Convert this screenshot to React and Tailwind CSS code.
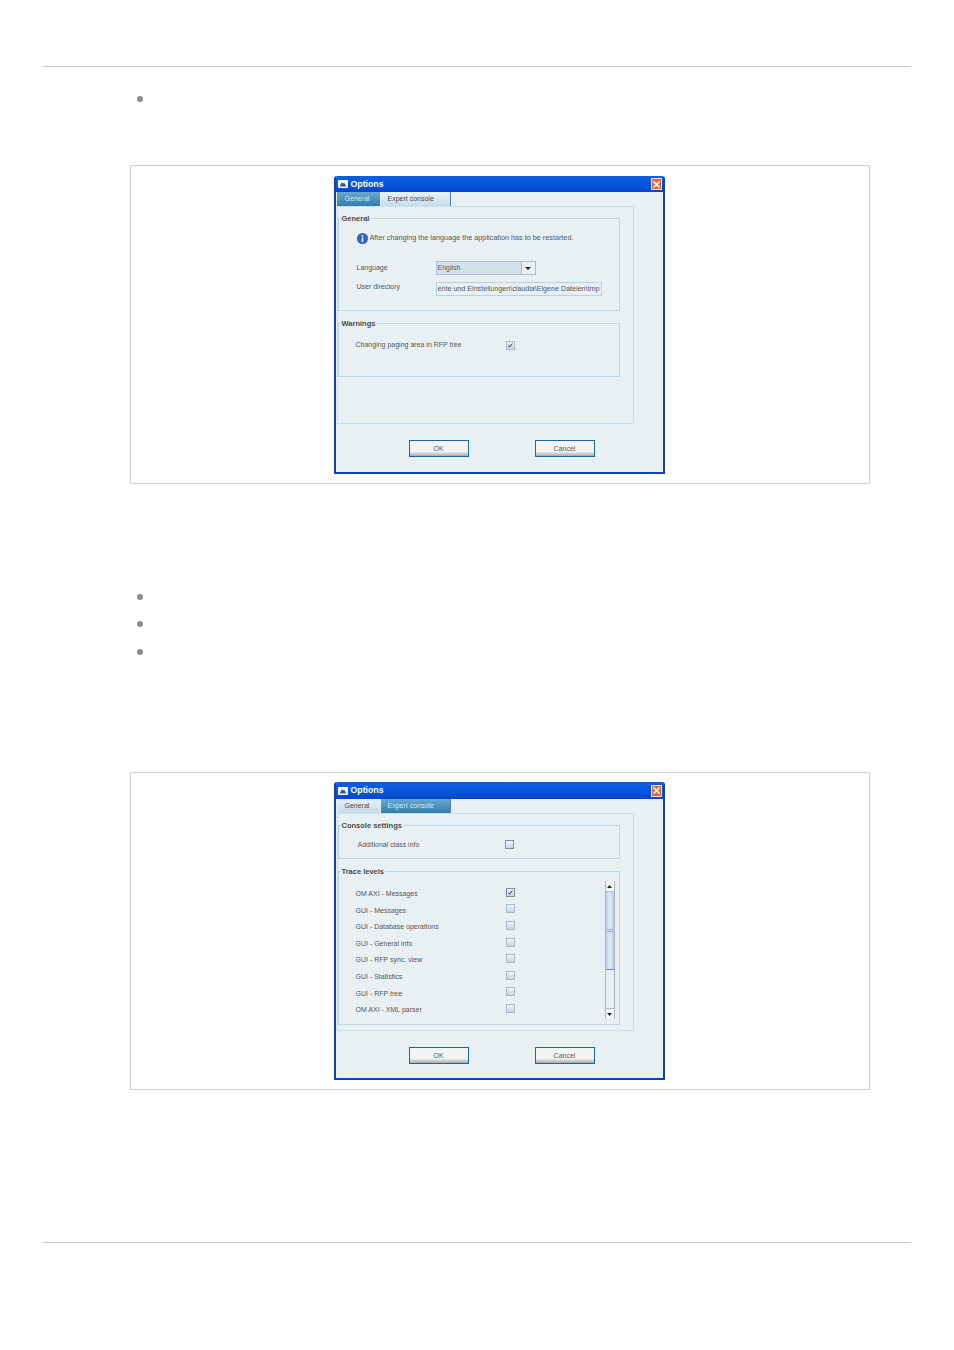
import { useState } from 'react';

const TRACE_LEVELS = [
  { label: 'OM AXI - Messages', checked: true },
  { label: 'GUI - Messages' },
  { label: 'GUI - Database operations' },
  { label: 'GUI - General info' },
  { label: 'GUI - RFP sync. view' },
  { label: 'GUI - Statistics' },
  { label: 'GUI - RFP tree' },
  { label: 'OM AXI - XML parser' },
];

function Bullet({ className = '' }) {
  return (
    <li className={`flex items-center h-[7px] ${className}`}>
      <span className="w-[6px] h-[6px] rounded-full bg-[#8c8c8c]" />
    </li>
  );
}

function CheckBox({ checked, strong }) {
  return (
    <span
      className={`block w-[9px] h-[9px] border shrink-0 bg-gradient-to-b from-[#eef3f7] to-[#c6d6e4] ${
        strong ? 'border-[#7f8f9c]' : 'border-[#a9b8c4]'
      }`}
    >
      {checked && (
        <svg viewBox="0 0 9 9" className="w-full h-full">
          <path d="M2 4.5 L3.2 6.5 L7 2" fill="none" stroke="#222" strokeWidth="1.2" />
        </svg>
      )}
    </span>
  );
}

function Group({ title, className = '', children }) {
  return (
    <fieldset className={`border border-[#bcd6e8] w-[282px] min-w-0 ${className}`}>
      <legend className="ml-[2px] px-[1px] text-[7.5px] h-[10px] leading-[12px] font-bold text-[#4a4a4a]">{title}</legend>
      {children}
    </fieldset>
  );
}

function DialogButton({ children, className = '' }) {
  return (
    <button className={`w-[60px] h-[17px] border border-[#14689f] bg-gradient-to-b from-[#f4f4f4] from-70% to-[#a9a9a9] text-[7px] leading-none text-[#555] ${className}`}>
      {children}
    </button>
  );
}

function Tab({ active, className = '', children }) {
  return (
    <div
      className={`h-[14px] flex items-center text-[7px] ${className} ${
        active
          ? 'bg-gradient-to-b from-[#6ba7cc] to-[#2d7cae] text-[#d5e6f0]'
          : 'bg-gradient-to-b from-[#e9f1f6] to-[#c6dcec] text-[#4a4a4a]'
      }`}
    >
      {children}
    </div>
  );
}

function Dialog({ active, titleHeight = 'h-[16px]', children }) {
  return (
    <div
      className="w-[331px] h-[298px] flex flex-col border-2 border-t-0 border-[#0b3fc6] bg-[#e9f0f4] rounded-t-[3px] overflow-hidden opacity-[0.99]"
      style={{ fontFamily: '"Liberation Sans", Arial, sans-serif' }}
    >
      {/* title bar */}
      <div className={`${titleHeight} shrink-0 -mx-[2px] px-[4px] flex items-center bg-gradient-to-b from-[#0a5fe0] via-[#0656dc] to-[#0343c8]`}>
        <svg viewBox="0 0 10 8" className="w-[10px] h-[8px]">
          <rect width="10" height="8" rx="1" fill="#fff" />
          <path d="M1.5 6.5 L4 2 L5 3.5 L6 2.5 L8.5 6.5 Z" fill="#1f5fa8" />
        </svg>
        <span className="ml-[3px] mt-px text-[8.75px] font-bold text-white">Options</span>
        <span className="ml-auto mr-[-1px] w-[11px] h-[12px] flex items-center justify-center bg-[#e8653c] border border-[#f6d9c8]">
          <svg viewBox="0 0 9 9" className="w-[9px] h-[9px]">
            <path d="M1.5 1.5 L7.5 7.5 M7.5 1.5 L1.5 7.5" stroke="#fff" strokeWidth="1.6" />
          </svg>
        </span>
      </div>
      {/* tabs */}
      <div className="flex h-[14px] shrink-0 ml-px gap-px">
        <Tab active={active === 'general'} className="w-[43px] pl-[8px]">General</Tab>
        <Tab active={active === 'expert'} className="w-[70px] pl-[7px] border-r border-[#5d7f99]">Expert console</Tab>
      </div>
      {/* tab panel */}
      <div className="w-[297px] h-[218px] shrink-0 ml-px border border-[#c8dfee]">
        {children}
      </div>
      {/* buttons */}
      <div className="flex mt-[16px] ml-[73px] gap-[66px]">
        <DialogButton>OK</DialogButton>
        <DialogButton>Cancel</DialogButton>
      </div>
    </div>
  );
}

function GeneralPanel() {
  return (
    <div className="pt-[6px] text-[7px] text-[#555]">
      <Group title="General" className="h-[98px]">
        <div className="flex items-center h-[11px] mt-[10px] ml-[18px]">
          <svg viewBox="0 0 11 11" className="w-[11px] h-[11px]">
            <circle cx="5.5" cy="5.5" r="5.5" fill="#2a62c9" />
            <rect x="4.7" y="2" width="1.6" height="1.6" fill="#fff" />
            <rect x="4.7" y="4.5" width="1.6" height="4.5" fill="#fff" />
          </svg>
          <span className="ml-[2px] text-[7.25px] whitespace-nowrap">After changing the language the application has to be restarted.</span>
        </div>
        <div className="flex items-center h-[14px] mt-[17px]">
          <span className="w-[97px] pl-[18px] shrink-0">Language</span>
          <div className="w-[100px] h-[14px] flex border border-[#a9bfd0] bg-[#d6e2ea]">
            <span className="flex-1 pl-px leading-[12px]">English</span>
            <span className="w-[14px] flex items-center justify-center border-l border-[#a9bfd0] bg-[#eaf1f5]">
              <svg viewBox="0 0 6 3" className="w-[6px] h-[3px]">
                <path d="M0 0 H6 L3 3 Z" fill="#222" />
              </svg>
            </span>
          </div>
        </div>
        <div className="flex items-center h-[14px] mt-[7px]">
          <span className="w-[97px] pl-[18px] shrink-0 -mt-[3px]">User directory</span>
          <div className="w-[166px] h-[14px] border border-[#b7cfe0] pl-px text-[7.15px] leading-[12px] whitespace-nowrap overflow-hidden">
            ente und Einstellungen\claudia\Eigene Dateien\tmp
          </div>
        </div>
      </Group>
      <Group title="Warnings" className="h-[59px] mt-[7px]">
        <div className="flex items-center h-[10px] mt-[12px]">
          <span className="w-[167px] pl-[17px] pt-[1px] shrink-0">Changing paging area in RFP tree</span>
          <CheckBox checked />
        </div>
      </Group>
    </div>
  );
}

function Scrollbar() {
  return (
    <div className="w-[10px] h-[138px] flex flex-col shrink-0 border-x border-[#a8b4bd] bg-[#e9f0f4]">
      <span className="h-[11px] flex items-center justify-center bg-[#f2f5f7] border-b border-[#b3bfc8]">
        <svg viewBox="0 0 5 3" className="w-[5px] h-[3px]"><path d="M0 3 H5 L2.5 0 Z" fill="#222" /></svg>
      </span>
      <span className="h-[78px] flex items-center justify-center bg-gradient-to-r from-[#bfd0e8] via-[#e3ebf5] to-[#b5c9e4] border-b border-[#6d8cc0]">
        <span className="w-[6px] h-[3px] border-y border-[#8aa6cf]" />
      </span>
      <span className="flex-1" />
      <span className="h-[11px] flex items-center justify-center bg-[#f2f5f7] border-t border-[#b3bfc8]">
        <svg viewBox="0 0 5 3" className="w-[5px] h-[3px]"><path d="M0 0 H5 L2.5 3 Z" fill="#222" /></svg>
      </span>
    </div>
  );
}

function ExpertPanel() {
  return (
    <div className="pt-[6px] text-[7px] text-[#555]">
      <Group title="Console settings" className="h-[39px]">
        <div className="flex items-center h-[10px] mt-[9px]">
          <span className="w-[166px] pl-[19px] pt-[2px] shrink-0">Additional class info</span>
          <CheckBox strong />
        </div>
      </Group>
      <Group title="Trace levels" className="h-[159px] mt-[7px]">
        <div className="flex pt-[5px]">
          <div className="w-[266px] shrink-0 pt-[3px]">
            {TRACE_LEVELS.map((row, i) => (
              <div key={row.label} className="flex items-center h-[16.6px]">
                <span className="w-[167px] pl-[17px] pt-[4px] shrink-0">{row.label}</span>
                <CheckBox checked={row.checked} strong={i === 0} />
              </div>
            ))}
          </div>
          <Scrollbar />
        </div>
      </Group>
    </div>
  );
}

function Figure({ className = '', children }) {
  return (
    <div className={`w-[740px] ml-[87px] border border-[#cfcfcf] flex justify-center pr-[2px] ${className}`}>
      {children}
    </div>
  );
}

export default function App() {
  const [page] = useState('manual');
  return (
    <div data-page={page} className="w-full h-[1350px] bg-white px-[43px] pt-[66px] overflow-hidden">
      <div className="h-[1177px] border-y border-[#c8c8c8]">
        <ul className="ml-[94px] mt-[28px]">
          <Bullet />
        </ul>
        <Figure className="mt-[63px] h-[319px] pt-[10px]">
          <Dialog active="general"><GeneralPanel /></Dialog>
        </Figure>
        <ul className="ml-[94px] mt-[109px] flex flex-col gap-[20.5px]">
          <Bullet />
          <Bullet />
          <Bullet />
        </ul>
        <Figure className="mt-[117px] h-[318px] pt-[9px]">
          <Dialog active="expert" titleHeight="h-[17px]"><ExpertPanel /></Dialog>
        </Figure>
      </div>
    </div>
  );
}
